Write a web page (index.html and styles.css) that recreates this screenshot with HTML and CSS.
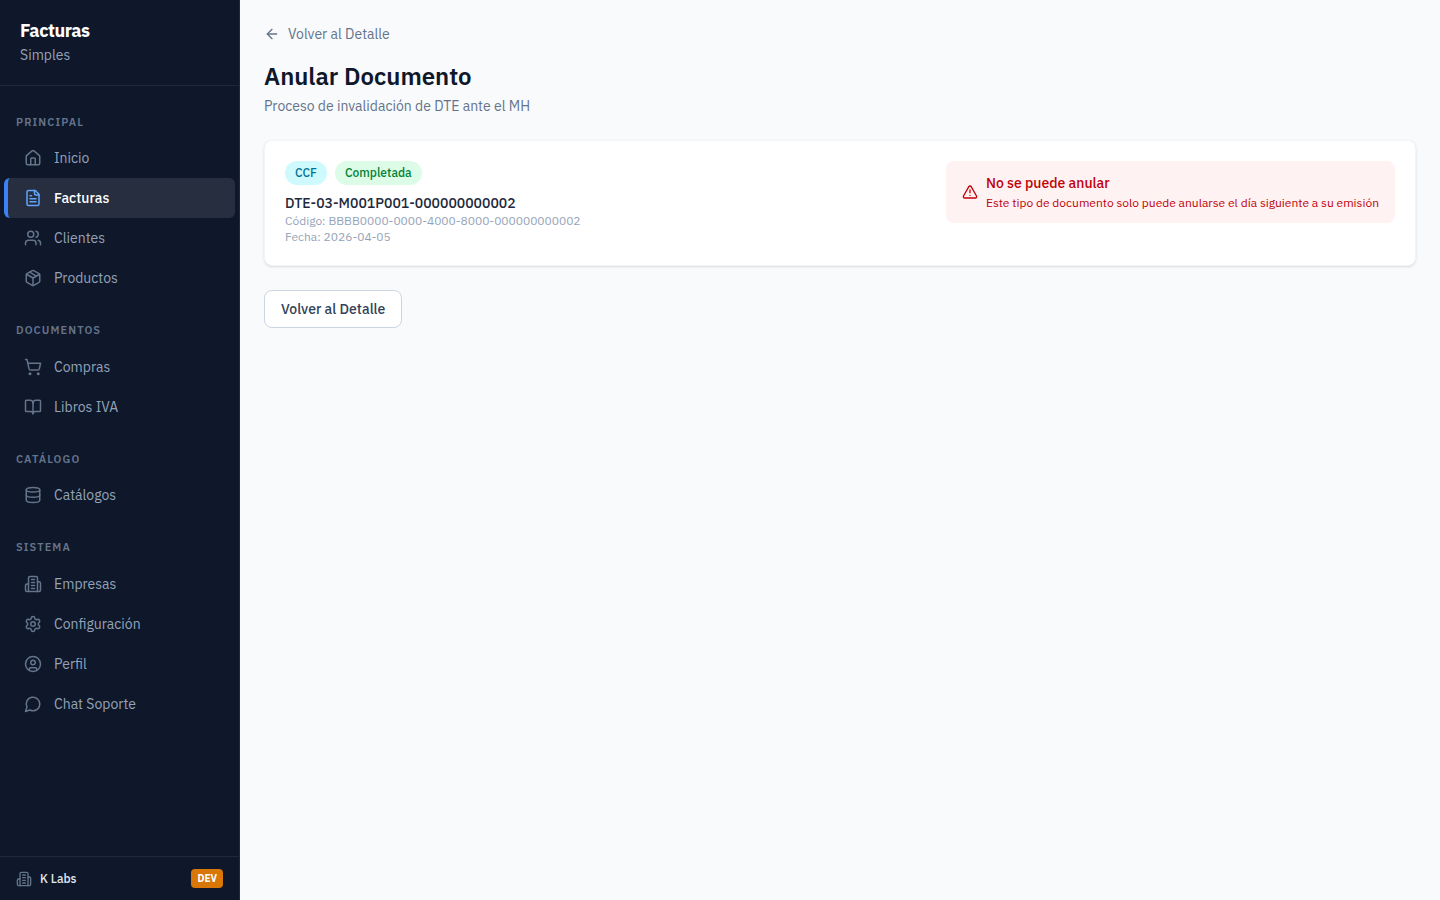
FILE: index.html
```html
<!DOCTYPE html>
<html lang="es">
<head>
  <meta charset="UTF-8" />
  <meta name="viewport" content="width=device-width, initial-scale=1.0" />
  <title>Anular Documento - Facturas Simples</title>
  <link rel="stylesheet" href="styles.css">
</head>
<body>
  <aside class="sidebar">
    <div class="brand">
      <div class="brand-name">Facturas</div>
      <div class="brand-sub">Simples</div>
    </div>

    <nav class="nav">
      <section class="nav-section">
        <h2>Principal</h2>
        <a href="#" class="nav-item">
          <svg class="icon" viewBox="0 0 24 24"><path d="M15 21v-8a1 1 0 0 0-1-1h-4a1 1 0 0 0-1 1v8"/><path d="M3 10a2 2 0 0 1 .709-1.528l7-6a2 2 0 0 1 2.582 0l7 6A2 2 0 0 1 21 10v9a2 2 0 0 1-2 2H5a2 2 0 0 1-2-2z"/></svg>
          Inicio
        </a>
        <a href="#" class="nav-item active">
          <svg class="icon" viewBox="0 0 24 24"><path d="M15 2H6a2 2 0 0 0-2 2v16a2 2 0 0 0 2 2h12a2 2 0 0 0 2-2V7Z"/><path d="M14 2v4a2 2 0 0 0 2 2h4"/><path d="M10 9H8"/><path d="M16 13H8"/><path d="M16 17H8"/></svg>
          Facturas
        </a>
        <a href="#" class="nav-item">
          <svg class="icon" viewBox="0 0 24 24"><path d="M16 21v-2a4 4 0 0 0-4-4H6a4 4 0 0 0-4 4v2"/><circle cx="9" cy="7" r="4"/><path d="M22 21v-2a4 4 0 0 0-3-3.87"/><path d="M16 3.13a4 4 0 0 1 0 7.75"/></svg>
          Clientes
        </a>
        <a href="#" class="nav-item">
          <svg class="icon" viewBox="0 0 24 24"><path d="M11 21.73a2 2 0 0 0 2 0l7-4A2 2 0 0 0 21 16V8a2 2 0 0 0-1-1.73l-7-4a2 2 0 0 0-2 0l-7 4A2 2 0 0 0 3 8v8a2 2 0 0 0 1 1.73z"/><path d="M12 22V12"/><path d="m3.3 7 8.7 5 8.7-5"/><path d="m7.5 4.27 9 5.15"/></svg>
          Productos
        </a>
      </section>

      <section class="nav-section">
        <h2>Documentos</h2>
        <a href="#" class="nav-item">
          <svg class="icon" viewBox="0 0 24 24"><circle cx="8" cy="21" r="1"/><circle cx="19" cy="21" r="1"/><path d="M2.05 2.05h2l2.66 12.42a2 2 0 0 0 2 1.58h9.78a2 2 0 0 0 1.95-1.57l1.65-7.43H5.12"/></svg>
          Compras
        </a>
        <a href="#" class="nav-item">
          <svg class="icon" viewBox="0 0 24 24"><path d="M12 7v14"/><path d="M3 18a1 1 0 0 1-1-1V4a1 1 0 0 1 1-1h5a4 4 0 0 1 4 4 4 4 0 0 1 4-4h5a1 1 0 0 1 1 1v13a1 1 0 0 1-1 1h-6a3 3 0 0 0-3 3 3 3 0 0 0-3-3z"/></svg>
          Libros IVA
        </a>
      </section>

      <section class="nav-section">
        <h2>Catálogo</h2>
        <a href="#" class="nav-item">
          <svg class="icon" viewBox="0 0 24 24"><ellipse cx="12" cy="5" rx="9" ry="3"/><path d="M3 5v14a9 3 0 0 0 18 0V5"/><path d="M3 12a9 3 0 0 0 18 0"/></svg>
          Catálogos
        </a>
      </section>

      <section class="nav-section">
        <h2>Sistema</h2>
        <a href="#" class="nav-item">
          <svg class="icon" viewBox="0 0 24 24"><path d="M6 22V4a2 2 0 0 1 2-2h8a2 2 0 0 1 2 2v18Z"/><path d="M6 12H4a2 2 0 0 0-2 2v6a2 2 0 0 0 2 2h2"/><path d="M18 9h2a2 2 0 0 1 2 2v9a2 2 0 0 1-2 2h-2"/><path d="M10 6h4"/><path d="M10 10h4"/><path d="M10 14h4"/><path d="M10 18h4"/></svg>
          Empresas
        </a>
        <a href="#" class="nav-item">
          <svg class="icon" viewBox="0 0 24 24"><path d="M9.671 4.136a2.34 2.34 0 0 1 4.659 0 2.34 2.34 0 0 0 3.319 1.915 2.34 2.34 0 0 1 2.33 4.033 2.34 2.34 0 0 0 0 3.831 2.34 2.34 0 0 1-2.33 4.033 2.34 2.34 0 0 0-3.319 1.915 2.34 2.34 0 0 1-4.659 0 2.34 2.34 0 0 0-3.32-1.915 2.34 2.34 0 0 1-2.33-4.033 2.34 2.34 0 0 0 0-3.831A2.34 2.34 0 0 1 6.35 6.051a2.34 2.34 0 0 0 3.319-1.915"/><circle cx="12" cy="12" r="3"/></svg>
          Configuración
        </a>
        <a href="#" class="nav-item">
          <svg class="icon" viewBox="0 0 24 24"><circle cx="12" cy="12" r="10"/><circle cx="12" cy="10" r="3"/><path d="M7 20.662V19a2 2 0 0 1 2-2h6a2 2 0 0 1 2 2v1.662"/></svg>
          Perfil
        </a>
        <a href="#" class="nav-item">
          <svg class="icon" viewBox="0 0 24 24"><path d="M7.9 20A9 9 0 1 0 4 16.1L2 22Z"/></svg>
          Chat Soporte
        </a>
      </section>
    </nav>

    <div class="sidebar-footer">
      <svg class="icon" viewBox="0 0 24 24"><path d="M6 22V4a2 2 0 0 1 2-2h8a2 2 0 0 1 2 2v18Z"/><path d="M6 12H4a2 2 0 0 0-2 2v6a2 2 0 0 0 2 2h2"/><path d="M18 9h2a2 2 0 0 1 2 2v9a2 2 0 0 1-2 2h-2"/><path d="M10 6h4"/><path d="M10 10h4"/><path d="M10 14h4"/><path d="M10 18h4"/></svg>
      <span class="company">K Labs</span>
      <span class="env">DEV</span>
    </div>
  </aside>

  <main class="content">
    <a href="#" class="back-link">
      <svg class="icon" viewBox="0 0 24 24"><path d="m12 19-7-7 7-7"/><path d="M19 12H5"/></svg>
      Volver al Detalle
    </a>
    <h1>Anular Documento</h1>
    <p class="subtitle">Proceso de invalidación de DTE ante el MH</p>

    <div class="card">
      <div class="document">
        <div class="badges">
          <span class="badge badge-type">CCF</span>
          <span class="badge badge-done">Completada</span>
        </div>
        <p class="doc-number">DTE-03-M001P001-000000000002</p>
        <p class="doc-meta">Código: BBBB0000-0000-4000-8000-000000000002</p>
        <p class="doc-meta">Fecha: 2026-04-05</p>
      </div>
      <div class="alert" role="alert">
        <svg class="icon" viewBox="0 0 24 24"><path d="m21.73 18-8-14a2 2 0 0 0-3.48 0l-8 14A2 2 0 0 0 4 21h16a2 2 0 0 0 1.73-3"/><path d="M12 9v4"/><path d="M12 17h.01"/></svg>
        <div>
          <p class="alert-title">No se puede anular</p>
          <p class="alert-text">Este tipo de documento solo puede anularse el día siguiente a su emisión</p>
        </div>
      </div>
    </div>

    <button type="button" class="btn">Volver al Detalle</button>
  </main>
</body>
</html>
```
FILE: styles.css
```css
:root {
  --navy: #0f172a;
  --navy-line: #1e293b;
  --slate: #64748b;
  --slate-light: #94a3b8;
  --page-bg: #f8fafc;
  --red: #c10007;
}

* {
  box-sizing: border-box;
}

body {
  margin: 0;
  display: flex;
  min-height: 100vh;
  background: var(--page-bg);
  color: var(--navy);
  font-family: "IBM Plex Sans", Roboto, "Noto Sans", sans-serif;
  font-size: 14px;
  line-height: 20px;
}

h1, h2, p {
  margin: 0;
}

a {
  text-decoration: none;
}

.icon {
  width: 16px;
  height: 16px;
  flex-shrink: 0;
  fill: none;
  stroke: currentColor;
  stroke-width: 2;
  stroke-linecap: round;
  stroke-linejoin: round;
}

/* Sidebar */
.sidebar {
  position: sticky;
  top: 0;
  display: flex;
  flex-direction: column;
  flex-shrink: 0;
  width: 240px;
  height: 100vh;
  background: var(--navy);
  border-right: 1px solid var(--navy-line);
}

.brand {
  padding: 20px;
  border-bottom: 1px solid var(--navy-line);
}

.brand-name {
  color: #fff;
  font-size: 18px;
  font-weight: 700;
  line-height: 1.25;
  letter-spacing: -0.025em;
}

.brand-sub {
  margin-top: 2px;
  color: var(--slate-light);
}

.nav {
  flex: 1;
  padding: 16px 4px;
  overflow-y: auto;
}

.nav-section + .nav-section {
  margin-top: 12px;
}

.nav-section h2 {
  padding: 12px 12px 8px;
  color: var(--slate);
  font-size: 11px;
  font-weight: 600;
  line-height: 1.5;
  letter-spacing: 0.1em;
  text-transform: uppercase;
}

.nav-item {
  display: flex;
  align-items: center;
  gap: 12px;
  height: 40px;
  padding: 0 16px;
  border-left: 4px solid transparent;
  border-radius: 6px;
  color: var(--slate-light);
}

.nav-item .icon {
  width: 18px;
  height: 18px;
  color: var(--slate);
}

.nav-item:hover {
  color: #fff;
}

.nav-item.active {
  border-left-color: #3b82f6;
  background: rgba(255, 255, 255, 0.1);
  color: #fff;
  font-weight: 500;
}

.nav-item.active .icon {
  color: #60a5fa;
}

.sidebar-footer {
  display: flex;
  align-items: center;
  gap: 8px;
  padding: 12px 16px;
  border-top: 1px solid var(--navy-line);
  color: var(--slate);
}

.company {
  flex: 1;
  color: #e2e8f0;
  font-size: 12px;
  font-weight: 500;
  line-height: 18px;
}

.env {
  padding: 2px 6px;
  border-radius: 4px;
  background: #d97706;
  color: #fff;
  font-size: 10px;
  font-weight: 700;
  line-height: 15px;
}

/* Content */
.content {
  flex: 1;
  min-width: 0;
  padding: 24px;
}

.back-link {
  display: flex;
  align-items: center;
  gap: 8px;
  width: fit-content;
  color: var(--slate);
}

h1 {
  margin-top: 16px;
  font-size: 24px;
  font-weight: 600;
  line-height: 32px;
}

.subtitle {
  margin-top: 4px;
  color: var(--slate);
}

.card {
  display: flex;
  align-items: flex-start;
  justify-content: space-between;
  gap: 16px;
  margin: 24px 0;
  padding: 20px;
  border: 1px solid #f1f5f9;
  border-radius: 8px;
  background: #fff;
  box-shadow: 0 1px 3px rgba(0, 0, 0, 0.1), 0 1px 2px -1px rgba(0, 0, 0, 0.1);
}

.badges {
  display: flex;
  gap: 8px;
  margin-bottom: 8px;
}

.badge {
  padding: 4px 10px;
  border-radius: 12px;
  font-size: 12px;
  font-weight: 500;
  line-height: 16px;
}

.badge-type {
  background: #cefafe;
  color: #007595;
}

.badge-done {
  background: #dcfce7;
  color: #008236;
}

.doc-number {
  color: #1e293b;
  font-weight: 500;
}

.doc-meta {
  color: var(--slate-light);
  font-size: 12px;
  line-height: 16px;
}

.alert {
  display: flex;
  align-items: center;
  gap: 8px;
  padding: 12px 16px;
  border-radius: 8px;
  background: #fef2f2;
  color: var(--red);
}

.alert-title {
  font-weight: 500;
}

.alert-text {
  margin-top: 2px;
  font-size: 12px;
  line-height: 16px;
}

.btn {
  height: 38px;
  padding: 0 16px;
  border: 1px solid #cad5e2;
  border-radius: 8px;
  background: #fff;
  color: #314158;
  font: inherit;
  font-weight: 500;
  cursor: pointer;
}

.btn:hover {
  background: var(--page-bg);
}
```
